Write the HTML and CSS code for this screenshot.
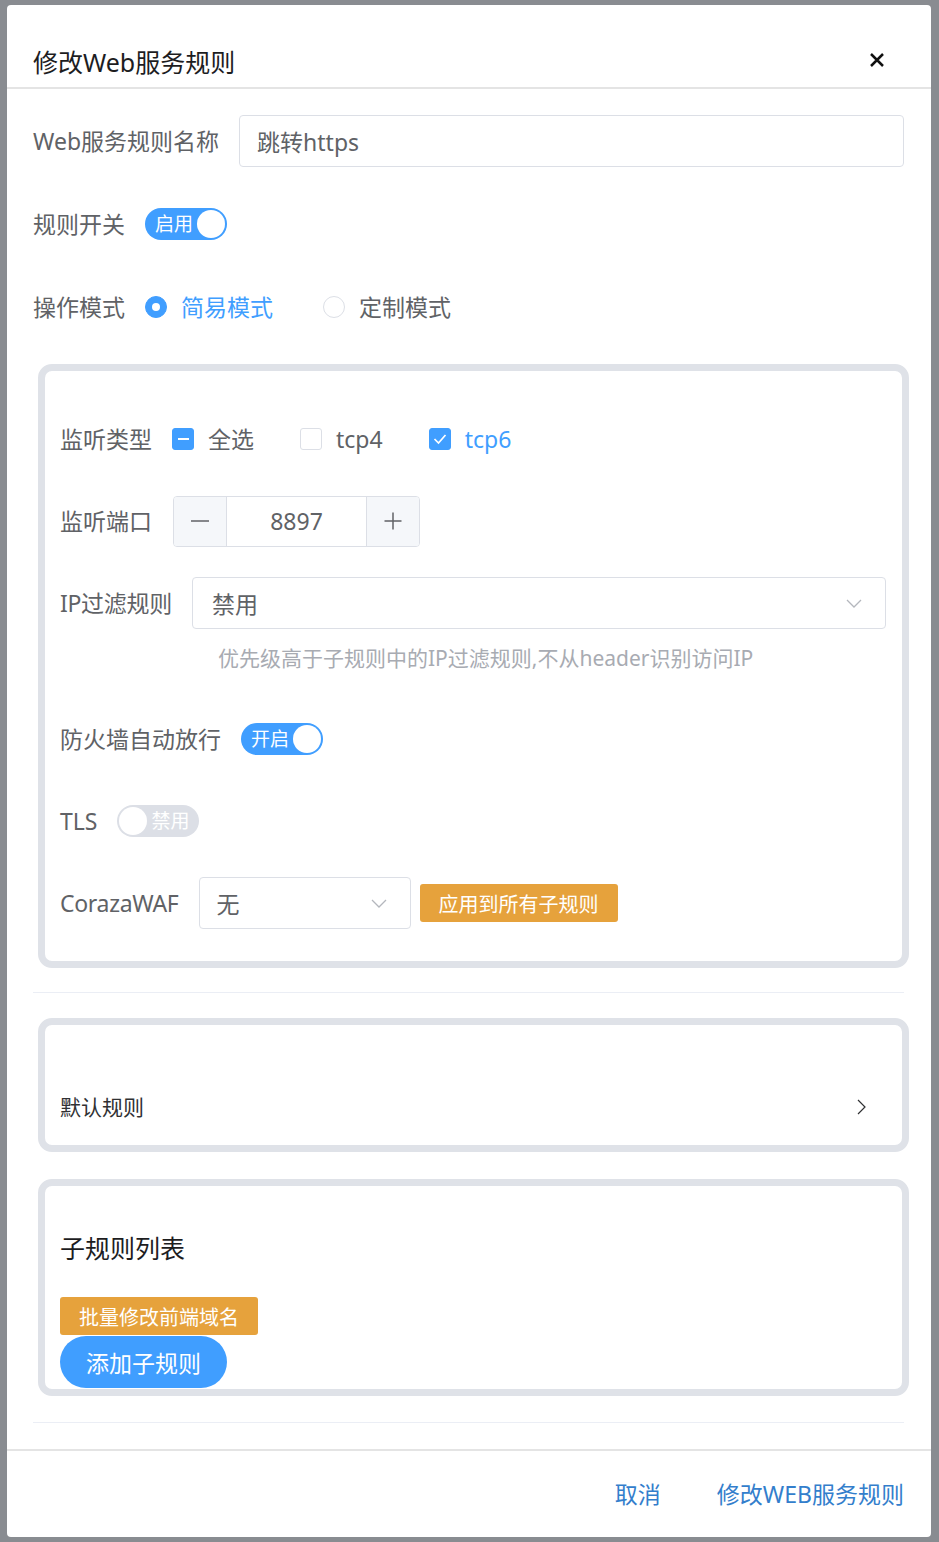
FILE: index.html
```html
<!DOCTYPE html>
<html lang="zh-CN">
<head>
<meta charset="utf-8">
<title>修改Web服务规则</title>
<link rel="stylesheet" href="styles.css">
</head>
<body>
<div class="dialog">
  <div class="dlg-header">
    <span class="dlg-title">修改Web服务规则</span>
    <span class="dlg-close">
      <svg width="16" height="16" viewBox="0 0 16 16"><path d="M2 2 L14 14 M14 2 L2 14" stroke="#111" stroke-width="2.5" fill="none"/></svg>
    </span>
  </div>

  <div class="dlg-body">
    <div class="form-row">
      <label class="lbl">Web服务规则名称</label>
      <div class="input grow">跳转https</div>
    </div>
    <div class="form-row">
      <label class="lbl">规则开关</label>
      <div class="switch on"><span class="sw-text">启用</span><span class="knob"></span></div>
    </div>
    <div class="form-row">
      <label class="lbl">操作模式</label>
      <div class="radio checked"><span class="radio-dot"></span><span class="radio-label">简易模式</span></div>
      <div class="radio"><span class="radio-dot"></span><span class="radio-label">定制模式</span></div>
    </div>

    <div class="card card-main">
      <div class="form-row">
        <label class="lbl">监听类型</label>
        <div class="cbox indeterminate"><span class="cbox-box"><span class="cbox-bar"></span></span><span class="cbox-label">全选</span></div>
        <div class="cbox"><span class="cbox-box"></span><span class="cbox-label">tcp4</span></div>
        <div class="cbox checked"><span class="cbox-box"><svg width="22" height="22" viewBox="0 0 22 22"><path d="M5.5 11 L9.5 15 L16.5 7" stroke="#fff" stroke-width="1.7" fill="none"/></svg></span><span class="cbox-label">tcp6</span></div>
      </div>
      <div class="form-row">
        <label class="lbl">监听端口</label>
        <div class="num">
          <span class="num-btn minus"><svg width="20" height="20" viewBox="0 0 20 20"><path d="M1 10 H19" stroke="#606266" stroke-width="1.5"/></svg></span>
          <span class="num-val">8897</span>
          <span class="num-btn plus"><svg width="18" height="18" viewBox="0 0 18 18"><path d="M0.5 9 H17.5 M9 0.5 V17.5" stroke="#606266" stroke-width="1.5"/></svg></span>
        </div>
      </div>
      <div class="form-row no-mb">
        <label class="lbl tight">IP过滤规则</label>
        <div class="select grow"><span>禁用</span><svg width="16" height="9" viewBox="0 0 16 9"><path d="M1 1 L8 8 L15 1" stroke="#b4b7bd" stroke-width="1.3" fill="none"/></svg></div>
      </div>
      <div class="help">优先级高于子规则中的IP过滤规则,不从header识别访问IP</div>
      <div class="form-row">
        <label class="lbl">防火墙自动放行</label>
        <div class="switch on"><span class="sw-text">开启</span><span class="knob"></span></div>
      </div>
      <div class="form-row">
        <label class="lbl">TLS</label>
        <div class="switch off"><span class="knob"></span><span class="sw-text">禁用</span></div>
      </div>
      <div class="form-row">
        <label class="lbl tight">CorazaWAF</label>
        <div class="select waf"><span>无</span><svg width="16" height="9" viewBox="0 0 16 9"><path d="M1 1 L8 8 L15 1" stroke="#b4b7bd" stroke-width="1.3" fill="none"/></svg></div>
        <div class="btn-warn apply">应用到所有子规则</div>
      </div>
    </div>

    <div class="divider first"></div>

    <div class="card card-default">
      <span class="default-text">默认规则</span>
      <svg width="9" height="16" viewBox="0 0 9 16"><path d="M1 1 L8 8 L1 15" stroke="#303133" stroke-width="1.2" fill="none"/></svg>
    </div>

    <div class="card card-sub">
      <div class="sub-title">子规则列表</div>
      <div class="btn-warn batch">批量修改前端域名</div>
      <div class="btn-round">添加子规则</div>
    </div>

    <div class="divider last"></div>
  </div>

  <div class="dlg-footer">
    <span class="foot-btn">取消</span>
    <span class="foot-btn">修改WEB服务规则</span>
  </div>
</div>
</body>
</html>
```

FILE: styles.css
```css
* { box-sizing: border-box; }
html, body { margin: 0; padding: 0; }
body {
  background: #898c91;
  font-family: "Noto Sans", "Noto Sans CJK SC", sans-serif;
  width: 939px;
  height: 1542px;
  overflow: hidden;
}
.dialog {
  margin: 5px 0 0 7px;
  width: 924px;
  height: 1532px;
  background: #fff;
  border-radius: 4px;
  display: flex;
  flex-direction: column;
  overflow: hidden;
}
.dlg-header {
  height: 84px;
  flex-shrink: 0;
  border-bottom: 2px solid #e4e4e4;
  display: flex;
  align-items: center;
  justify-content: space-between;
  padding: 32px 46px 0 26px;
}
.dlg-title {
  font-size: 25px;
  line-height: 34px;
  color: #1d1d1f;
}
.dlg-close {
  display: flex;
  margin-bottom: 4px;
}
.dlg-body {
  flex: 1;
  padding: 26px 27px 26px 26px;
}
.form-row {
  display: flex;
  align-items: center;
  height: 52px;
  margin-bottom: 31px;
}
.lbl {
  font-size: 23px;
  line-height: 32px;
  color: #606266;
  padding-right: 20px;
  white-space: nowrap;
}
.lbl.tight { letter-spacing: -0.3px; }
.grow { flex: 1; }
.input {
  height: 52px;
  border: 1px solid #dcdfe6;
  border-radius: 4px;
  padding-left: 17px;
  font-size: 23px;
  color: #606266;
  display: flex;
  align-items: center;
}

/* switch */
.switch {
  width: 82px;
  height: 32px;
  border-radius: 16px;
  display: flex;
  align-items: center;
  padding: 0 2px;
}
.switch.on { background: #409eff; }
.switch.off { background: #dcdfe6; }
.sw-text {
  color: #fff;
  font-size: 19px;
  line-height: 32px;
}
.switch.on .sw-text { margin-left: 8px; }
.switch.off .sw-text { margin-left: 4px; }
.knob {
  width: 28px;
  height: 28px;
  border-radius: 50%;
  background: #fff;
  flex-shrink: 0;
}
.switch.on .knob { margin-left: auto; }

/* radio */
.radio {
  display: flex;
  align-items: center;
  margin-right: 50px;
}
.radio-dot {
  width: 22px;
  height: 22px;
  border-radius: 50%;
  border: 1px solid #dcdfe6;
  background: #fff;
  margin-right: 14px;
  display: flex;
  align-items: center;
  justify-content: center;
}
.radio.checked .radio-dot {
  background: #409eff;
  border-color: #409eff;
}
.radio.checked .radio-dot::after {
  content: "";
  width: 8px;
  height: 8px;
  border-radius: 50%;
  background: #fff;
}
.radio-label {
  font-size: 23px;
  line-height: 32px;
  color: #606266;
}
.radio.checked .radio-label { color: #409eff; }

/* checkbox */
.cbox {
  display: flex;
  align-items: center;
  margin-right: 46px;
}
.cbox-box {
  width: 22px;
  height: 22px;
  border: 1px solid #dcdfe6;
  border-radius: 3px;
  background: #fff;
  margin-right: 14px;
  display: flex;
  align-items: center;
  justify-content: center;
}
.cbox.checked .cbox-box,
.cbox.indeterminate .cbox-box {
  background: #409eff;
  border-color: #409eff;
}
.cbox-box svg { display: block; flex-shrink: 0; }
.cbox-bar {
  width: 11px;
  height: 2px;
  background: #fff;
}
.cbox-label {
  font-size: 23px;
  line-height: 32px;
  color: #606266;
}
.cbox.checked .cbox-label { color: #409eff; }

/* number input */
.num {
  display: flex;
  width: 247px;
  height: 51px;
  border: 1px solid #dcdfe6;
  border-radius: 4px;
  overflow: hidden;
  margin-left: 1px;
}
.num-btn {
  width: 53px;
  background: #f5f7fa;
  display: flex;
  align-items: center;
  justify-content: center;
}
.num-btn.minus { border-right: 1px solid #dcdfe6; }
.num-btn.plus { border-left: 1px solid #dcdfe6; }
.num-val {
  flex: 1;
  text-align: center;
  font-size: 23px;
  line-height: 49px;
  color: #606266;
}

/* select */
.select {
  height: 52px;
  border: 1px solid #dcdfe6;
  border-radius: 4px;
  display: flex;
  align-items: center;
  justify-content: space-between;
  padding: 0 23px 0 19px;
  font-size: 23px;
  color: #606266;
}
.select.waf {
  width: 212px;
  padding-left: 17px;
}
.help {
  height: 54px;
  margin-bottom: 30px;
  padding: 2px 0 0 158px;
  font-size: 21px;
  color: #a8abb2;
  display: flex;
  align-items: center;
}

/* buttons */
.btn-warn {
  background: #e6a23c;
  color: #fff;
  font-size: 20px;
  border-radius: 3px;
  height: 38px;
  padding: 0 19px;
  display: flex;
  align-items: center;
}
.btn-warn.apply { margin-left: 9px; }
.btn-round {
  background: #409eff;
  color: #fff;
  font-size: 23px;
  height: 52px;
  padding: 0 26px;
  border-radius: 26px;
  display: flex;
  align-items: center;
  margin-top: 1px;
}

/* cards */
.card {
  border: 7px solid #dfe2e8;
  border-radius: 14px;
  margin: 0 -5px 0 5px;
  background: #fff;
}
.card-main { padding: 42px 16px 32px 15px; }
.card-main .form-row { margin-bottom: 30px; }
.card-main .form-row.no-mb { margin-bottom: 0; }
.card-main .form-row:last-child { margin-bottom: 0; }

.divider {
  height: 1px;
  background: #ebeef5;
}
.divider.first { margin: 24px 0 25px; }
.divider.last { margin-top: 26px; }

.card-default {
  display: flex;
  align-items: center;
  justify-content: space-between;
  padding: 67px 36px 23px 15px;
}
.default-text {
  font-size: 21px;
  line-height: 30px;
  color: #303133;
}
.card-sub {
  margin-top: 27px;
  padding: 45px 0 1px 15px;
  display: flex;
  flex-direction: column;
  align-items: flex-start;
}
.sub-title {
  font-size: 25px;
  line-height: 34px;
  color: #1d1d1f;
}
.btn-warn.batch { margin-top: 32px; }

/* footer */
.dlg-footer {
  height: 88px;
  flex-shrink: 0;
  border-top: 2px solid #e4e4e4;
  display: flex;
  justify-content: flex-end;
  align-items: center;
  gap: 56px;
  padding: 0 27px 0 0;
}
.foot-btn {
  font-size: 23px;
  line-height: 34px;
  color: #337ecc;
}
```
